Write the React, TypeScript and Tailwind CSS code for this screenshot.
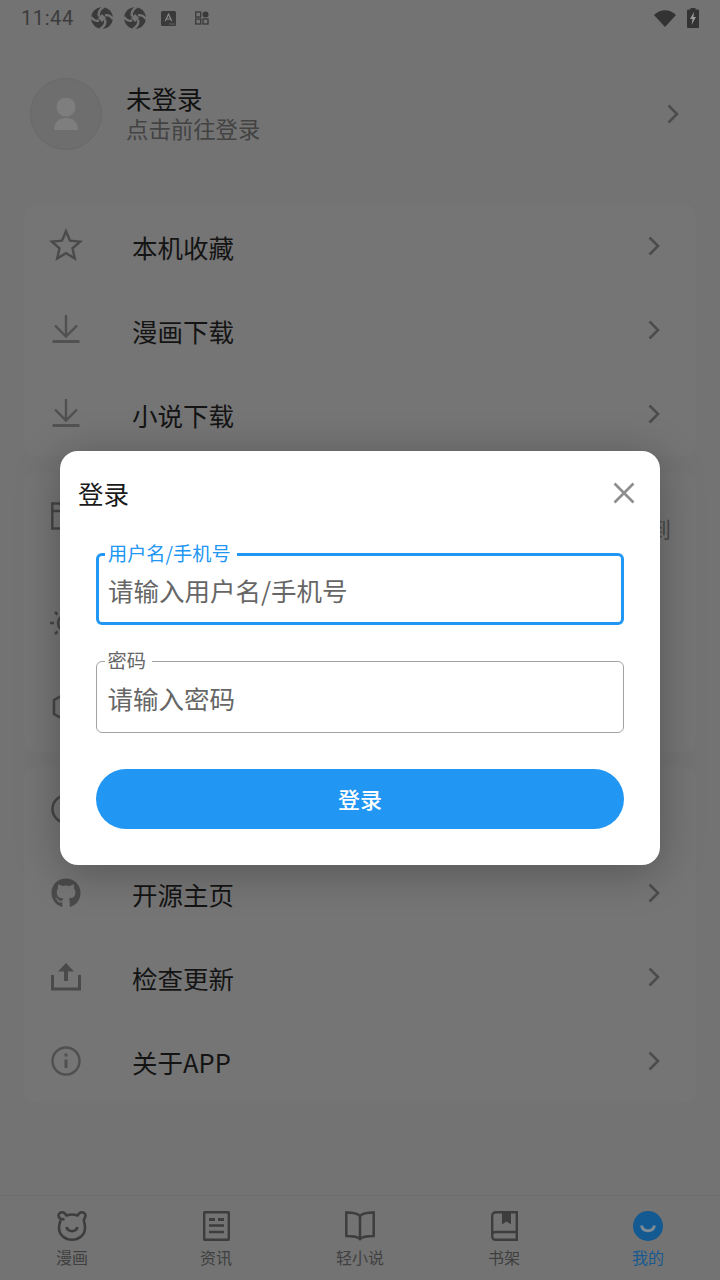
import React from "react";
import { FaGithub } from "react-icons/fa";

const font = { fontFamily: '"Noto Sans CJK SC", Roboto, sans-serif' };

function Chevron() {
  return (
    <svg width="12" height="20" viewBox="0 0 12 20" fill="none" stroke="#4c4c4c" strokeWidth="2.6">
      <path d="M1.5 1.5 L10 10 L1.5 18.5" />
    </svg>
  );
}

function Star() {
  return (
    <svg width="34" height="33" viewBox="0 0 34 33" className="mt-[-3px]" fill="none" stroke="#4a4a4a" strokeWidth="2.4" strokeLinejoin="miter">
      <path d="M17 3.2 L21 12.7 L31.2 13.6 L23.5 20.3 L25.8 30.4 L17 25.1 L8.2 30.4 L10.5 20.3 L2.8 13.6 L13 12.7 Z" />
    </svg>
  );
}

function Download() {
  return (
    <svg width="28" height="30" viewBox="0 0 28 30" className="mt-[-3px]" fill="none" stroke="#505050" strokeWidth="2.4">
      <path d="M14 1 V22 M3 11.5 L14 22.5 L25 11.5" />
      <path d="M0.5 27.5 H27.5" strokeWidth="2.8" />
    </svg>
  );
}

function Upload() {
  return (
    <svg width="30" height="28" viewBox="0 0 30 28" fill="#4a4a4a">
      <path d="M15 0 L23 8.5 H17 V18 H13 V8.5 H7 Z" />
      <path d="M0 12 H3 V24.6 H27 V12 H30 V27.5 H0 Z" />
    </svg>
  );
}

function Info() {
  return (
    <svg width="30" height="30" viewBox="0 0 30 30" fill="none" stroke="#505050" strokeWidth="2.4">
      <circle cx="15" cy="15" r="13.5" />
      <path d="M15 13.5 V22" strokeWidth="3" />
      <path d="M15 7.5 V10.5" strokeWidth="3" />
    </svg>
  );
}

function Row({ icon, label }: { icon?: React.ReactNode; label?: string }) {
  return (
    <div className="flex h-[84px] items-center pr-[36px]">
      <div className="flex w-[84px] shrink-0 justify-center">{icon}</div>
      <span className="ml-[24px] mt-[1px] flex-1 text-[25.5px] leading-[34px] text-[#141414]">{label}</span>
      <Chevron />
    </div>
  );
}

function PetalIcon() {
  return (
    <svg width="22" height="22" viewBox="0 0 22 22">
      <circle cx="11" cy="11" r="10.8" fill="#3a3a3a" />
      <path d="M11 7 L15 11 L11 15 L7 11 Z" fill="#737373" />
      <g stroke="#737373" strokeWidth="2.4" fill="none">
        <path d="M8 9.5 C7 5 9 2 13 0" />
        <path d="M14 8.5 C17 7.5 19.5 8.5 22 12" />
        <path d="M14 12.5 C15 17 13 20 9 22" />
        <path d="M8 13.5 C5 14.5 2.5 13.5 0 10" />
      </g>
    </svg>
  );
}

function StatusBar() {
  return (
    <div className="flex h-[36px] items-center pl-[21px] pr-[21px]">
      <span className="text-[20px] leading-none tracking-[0.6px] text-[#3c3c3c]" style={{ fontFamily: "Roboto, sans-serif" }}>11:44</span>
      <div className="ml-[17px] flex items-center gap-[11px]"><PetalIcon /><PetalIcon /></div>
      <svg className="ml-[15px]" width="15" height="15" viewBox="0 0 15 15">
        <rect width="15" height="15" rx="1.5" fill="#3a3a3a" />
        <path d="M4.3 10 L7.5 3.2 L10.7 10 M5.5 8 H9.5" fill="none" stroke="#8a8a8a" strokeWidth="1.2" />
        <path d="M8.5 13 h1 M10.5 13 h1 M12.5 13 h1" stroke="#8a8a8a" strokeWidth="1" />
      </svg>
      <svg className="ml-[19px]" width="14" height="14" viewBox="0 0 14 14" fill="none" stroke="#3a3a3a" strokeWidth="1.3">
        <rect x="0.7" y="1" width="5" height="5" />
        <rect x="0.7" y="8" width="5" height="5" />
        <rect x="8" y="8" width="5" height="5" />
        <circle cx="10.5" cy="3.5" r="3" fill="#3a3a3a" stroke="none" />
      </svg>
      <div className="flex-1" />
      <svg width="22" height="17" viewBox="0 0 22 17"><path d="M0 5 C6 -1.5 16 -1.5 22 5 L11 17 Z" fill="#333333" /></svg>
      <svg className="ml-[11px]" width="12" height="20" viewBox="0 0 12 20">
        <rect x="3.5" y="0" width="5" height="2" fill="#333333" />
        <rect x="0" y="1.5" width="12" height="18.5" rx="1" fill="#333333" />
        <path d="M7 4 L3 11 H5.5 L4.5 17 L9 9 H6.5 Z" fill="#9a9a9a" />
      </svg>
    </div>
  );
}

function Profile() {
  return (
    <div className="mt-[42px] flex h-[72px] items-center pl-[30px] pr-[41px]">
      <div className="flex h-[72px] w-[72px] items-center justify-center overflow-hidden rounded-full border border-[#696969] bg-[#6e6e6e]">
        <svg width="26" height="33" viewBox="0 0 26 33" fill="#7e7e7e">
          <circle cx="13" cy="9" r="9.5" />
          <path d="M1 32 C1 24 6 20 13 20 C20 20 25 24 25 32 Z" />
        </svg>
      </div>
      <div className="ml-[24px] mt-[-2px] flex flex-1 flex-col">
        <span className="text-[25.5px] leading-[30px] text-[#111111]">未登录</span>
        <span className="text-[22.4px] leading-[30px] text-[#434343]">点击前往登录</span>
      </div>
      <Chevron />
    </div>
  );
}

function NavItem({ label, active, children }: { label: string; active?: boolean; children: React.ReactNode }) {
  return (
    <div className="flex flex-1 flex-col items-center">
      <div className="flex h-[32px] items-center justify-center">{children}</div>
      <span className={"mt-[4px] text-[16px] leading-[22px] " + (active ? "text-[#165a92]" : "text-[#404040]")}>{label}</span>
    </div>
  );
}

function BottomNav() {
  return (
    <div className="mt-auto flex h-[85px] border-t border-[#6d6d6d] bg-[#737373] pt-[14px]">
      <NavItem label="漫画">
        <svg width="30" height="30" viewBox="0 0 30 30" fill="none" stroke="#3d3d3d" strokeWidth="2.6">
          <path d="M7.5 8 C4 9 1.5 7 1.5 4.6 C1.5 2.5 3.4 1.3 5.2 1.3 C7.5 1.3 8.6 3 9.5 4.5 C12.5 3.4 17.5 3.4 20.5 4.5 C21.4 3 22.5 1.3 24.8 1.3 C26.6 1.3 28.5 2.5 28.5 4.6 C28.5 7 26 9 26.8 10 C28 12.5 28 15 28 17 C28 24 22 28.7 15 28.7 C8 28.7 2 24 2 17 C2 13 3 11 3.6 9.5" />
          <path d="M9.5 16 C11 21.5 19 21.5 20.5 16" strokeWidth="2.8" />
        </svg>
      </NavItem>
      <NavItem label="资讯">
        <svg width="27" height="30" viewBox="0 0 27 30" fill="none" stroke="#3d3d3d">
          <rect x="1.2" y="1.2" width="24.6" height="27.6" strokeWidth="2.4" rx="0.5" />
          <path d="M6 8.5 H12 M15 8.5 H21" strokeWidth="3" />
          <path d="M6 14.5 H21 M6 21 H21" strokeWidth="2.6" />
        </svg>
      </NavItem>
      <NavItem label="轻小说">
        <svg width="30" height="30" viewBox="0 0 30 30" fill="none" stroke="#3d3d3d" strokeWidth="2.5">
          <path d="M15 5 C13 2.5 10 1.5 1.3 1.5 V25 C9 25 13 25.5 15 28 C17 25.5 21 25 28.7 25 V1.5 C20 1.5 17 2.5 15 5 Z" />
          <path d="M15 4 V29" />
        </svg>
      </NavItem>
      <NavItem label="书架">
        <svg width="27" height="30" viewBox="0 0 27 30" fill="none" stroke="#3d3d3d" strokeWidth="2.4">
          <path d="M25.8 1.2 H5 C2.8 1.2 1.2 2.8 1.2 5 V25 C1.2 27.2 2.8 28.8 5 28.8 H25.8 Z" />
          <path d="M1.5 23 C1.5 21.5 3 21 5 21 H25.8" />
          <path d="M11 1.5 H20 V13.5 L15.5 10.5 L11 13.5 Z" fill="#3d3d3d" stroke="none" />
        </svg>
      </NavItem>
      <NavItem label="我的" active>
        <svg width="30" height="30" viewBox="0 0 30 30">
          <circle cx="15" cy="15" r="15" fill="#135a92" />
          <path d="M8.5 14.5 C10 21.5 20 21.5 21.5 14.5" fill="none" stroke="#7a8a96" strokeWidth="3" />
        </svg>
      </NavItem>
    </div>
  );
}

function Field({ label, placeholder, focused }: { label: string; placeholder: string; focused?: boolean }) {
  return (
    <div className={"relative flex h-[72px] items-center rounded-[6px] pt-[2px] " + (focused ? "border-[3px] border-[#2196f3] pl-[9px]" : "border-[1.5px] border-[#a3a3a3] pl-[10.5px]")}>
      <span className={"absolute bg-white px-[3px] text-[19.2px] leading-[22px] " + (focused ? "left-[6px] top-[-14px] pr-[6px] text-[#2196f3]" : "left-[7.5px] top-[-13px] pr-[6px] text-[#666666]")}>
        {label}
      </span>
      <span className="text-[25.5px] leading-[34px] text-[#666666]">{placeholder}</span>
    </div>
  );
}

function LoginDialog() {
  return (
    <div className="absolute inset-0 flex items-start justify-center pt-[451px]">
      <div className="flex h-[414px] w-[600px] flex-col rounded-[18px] bg-white px-[36px] shadow-[0_6px_44px_rgba(0,0,0,0.28)]">
        <div className="ml-[-18px] mr-[-11px] mt-[22px] flex h-[40px] items-center justify-between">
          <span className="text-[25.5px] leading-[40px] text-[#1a1a1a]">登录</span>
          <svg width="22" height="22" viewBox="0 0 22 22" stroke="#8e8e8e" strokeWidth="2.6" fill="none">
            <path d="M1.5 1.5 L20.5 20.5 M20.5 1.5 L1.5 20.5" />
          </svg>
        </div>
        <div className="mt-[40px]"><Field label="用户名/手机号" placeholder="请输入用户名/手机号" focused /></div>
        <div className="mt-[36px]"><Field label="密码" placeholder="请输入密码" /></div>
        <button className="mt-[36px] h-[60px] w-full rounded-full bg-[#2196f3] pb-[2px] text-[22px] font-medium text-white">登录</button>
      </div>
    </div>
  );
}

export default function App() {
  return (
    <div className="relative flex h-[1280px] w-[720px] flex-col overflow-hidden bg-[#737373]" style={font}>
      <StatusBar />
      <Profile />
      <div className="mx-[24px] mt-[54px] rounded-[12px] bg-[#757575]">
        <Row icon={<Star />} label="本机收藏" />
        <Row icon={<Download />} label="漫画下载" />
        <Row icon={<Download />} label="小说下载" />
      </div>
      <div className="mx-[24px] mt-[17px] h-[279px] rounded-[12px] bg-[#757575]">
        <div className="flex h-[108px] items-start justify-between pl-[27px] pr-[25px] pt-[27px]">
          <svg width="30" height="30" viewBox="0 0 30 30" fill="none" stroke="#454545" strokeWidth="2.5">
            <rect x="1.3" y="3.5" width="27" height="25" />
            <path d="M1.3 11 H28 M10 0 V6" />
          </svg>
          <span className="mt-[14px] text-[22px] leading-[28px] text-[#484848]">到</span>
        </div>
        <div className="flex h-[84px] items-center pl-[26px]">
          <svg width="32" height="30" viewBox="0 0 32 30" fill="none" stroke="#454545" strokeWidth="2.5">
            <circle cx="16" cy="15" r="8" />
            <path d="M0 15 H4 M5 4 L7.5 6.5 M5 26 L7.5 23.5" />
          </svg>
        </div>
        <div className="flex h-[84px] items-center pl-[27px]">
          <svg width="30" height="30" viewBox="0 0 30 30" fill="none" stroke="#454545" strokeWidth="2.5">
            <path d="M15 1.5 L27 8 V22 L15 28.5 L3 22 V8 Z" />
          </svg>
        </div>
      </div>
      <div className="mx-[24px] mt-[15px] rounded-[12px] bg-[#757575]">
        <div className="flex h-[84px] items-center pl-[27px]">
          <svg width="30" height="30" viewBox="0 0 30 30" fill="none" stroke="#454545" strokeWidth="2.5"><circle cx="15" cy="15" r="13.5" /></svg>
        </div>
        <Row icon={<FaGithub size={30} color="#4a4a4a" />} label="开源主页" />
        <Row icon={<Upload />} label="检查更新" />
        <Row icon={<Info />} label="关于APP" />
      </div>
      <BottomNav />
      <LoginDialog />
    </div>
  );
}
